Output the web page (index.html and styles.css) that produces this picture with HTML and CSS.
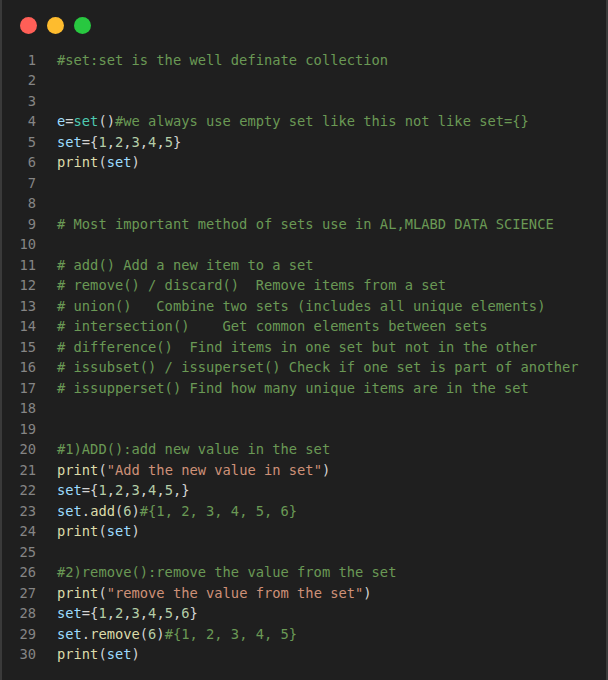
FILE: index.html
```html
<!DOCTYPE html>
<html>
<head>
<meta charset="utf-8">
<link rel="stylesheet" href="styles.css">
</head>
<body>
<div class="window">
  <div class="titlebar">
    <span class="dot red"></span>
    <span class="dot yellow"></span>
    <span class="dot green"></span>
  </div>
  <div class="code">
    <div class="ln">1</div><div class="tx"><span class="c">#set:set is the well definate collection</span></div>
    <div class="ln">2</div><div class="tx"></div>
    <div class="ln">3</div><div class="tx"></div>
    <div class="ln">4</div><div class="tx"><span class="v">e</span>=<span class="t">set</span>()<span class="c">#we always use empty set like this not like set={}</span></div>
    <div class="ln">5</div><div class="tx"><span class="v">set</span>={<span class="n">1</span>,<span class="n">2</span>,<span class="n">3</span>,<span class="n">4</span>,<span class="n">5</span>}</div>
    <div class="ln">6</div><div class="tx"><span class="f">print</span>(<span class="v">set</span>)</div>
    <div class="ln">7</div><div class="tx"></div>
    <div class="ln">8</div><div class="tx"></div>
    <div class="ln">9</div><div class="tx"><span class="c"># Most important method of sets use in AL,MLABD DATA SCIENCE</span></div>
    <div class="ln">10</div><div class="tx"></div>
    <div class="ln">11</div><div class="tx"><span class="c"># add() Add a new item to a set</span></div>
    <div class="ln">12</div><div class="tx"><span class="c"># remove() / discard()  Remove items from a set</span></div>
    <div class="ln">13</div><div class="tx"><span class="c"># union()   Combine two sets (includes all unique elements)</span></div>
    <div class="ln">14</div><div class="tx"><span class="c"># intersection()    Get common elements between sets</span></div>
    <div class="ln">15</div><div class="tx"><span class="c"># difference()  Find items in one set but not in the other</span></div>
    <div class="ln">16</div><div class="tx"><span class="c"># issubset() / issuperset() Check if one set is part of another</span></div>
    <div class="ln">17</div><div class="tx"><span class="c"># issupperset() Find how many unique items are in the set</span></div>
    <div class="ln">18</div><div class="tx"></div>
    <div class="ln">19</div><div class="tx"></div>
    <div class="ln">20</div><div class="tx"><span class="c">#1)ADD():add new value in the set</span></div>
    <div class="ln">21</div><div class="tx"><span class="f">print</span>(<span class="s">"Add the new value in set"</span>)</div>
    <div class="ln">22</div><div class="tx"><span class="v">set</span>={<span class="n">1</span>,<span class="n">2</span>,<span class="n">3</span>,<span class="n">4</span>,<span class="n">5</span>,}</div>
    <div class="ln">23</div><div class="tx"><span class="v">set</span>.<span class="f">add</span>(<span class="n">6</span>)<span class="c">#{1, 2, 3, 4, 5, 6}</span></div>
    <div class="ln">24</div><div class="tx"><span class="f">print</span>(<span class="v">set</span>)</div>
    <div class="ln">25</div><div class="tx"></div>
    <div class="ln">26</div><div class="tx"><span class="c">#2)remove():remove the value from the set</span></div>
    <div class="ln">27</div><div class="tx"><span class="f">print</span>(<span class="s">"remove the value from the set"</span>)</div>
    <div class="ln">28</div><div class="tx"><span class="v">set</span>={<span class="n">1</span>,<span class="n">2</span>,<span class="n">3</span>,<span class="n">4</span>,<span class="n">5</span>,<span class="n">6</span>}</div>
    <div class="ln">29</div><div class="tx"><span class="v">set</span>.<span class="f">remove</span>(<span class="n">6</span>)<span class="c">#{1, 2, 3, 4, 5}</span></div>
    <div class="ln">30</div><div class="tx"><span class="f">print</span>(<span class="v">set</span>)</div>
  </div>
</div>
</body>
</html>
```
FILE: styles.css
```css
html, body {
  margin: 0;
  padding: 0;
  background: #1f1f1f;
}

.window {
  box-sizing: border-box;
  width: 608px;
  height: 680px;
  background: #1f1f1f;
  border-left: 2px solid #3a3a3a;
  border-right: 2px solid #3a3a3a;
}

.titlebar {
  display: flex;
  gap: 10px;
  padding: 17px 0 0 18px;
  height: 17px;
}

.dot {
  width: 17px;
  height: 17px;
  border-radius: 50%;
  display: block;
}
.red { background: #ff5f57; }
.yellow { background: #febc2e; }
.green { background: #28c840; }

.code {
  margin-top: 16px;
  display: grid;
  grid-template-columns: 34px 1fr;
  column-gap: 21px;
  font-family: "DejaVu Sans Mono", "Liberation Mono", monospace;
  font-size: 13.75px;
  line-height: 20.48px;
  color: #d4d4d4;
}

.ln {
  text-align: right;
  color: #858585;
}

.tx {
  white-space: pre;
}

.c { color: #6a9955; }
.v { color: #9cdcfe; }
.t { color: #4ec9b0; }
.f { color: #dcdcaa; }
.n { color: #b5cea8; }
.s { color: #ce9178; }
```
